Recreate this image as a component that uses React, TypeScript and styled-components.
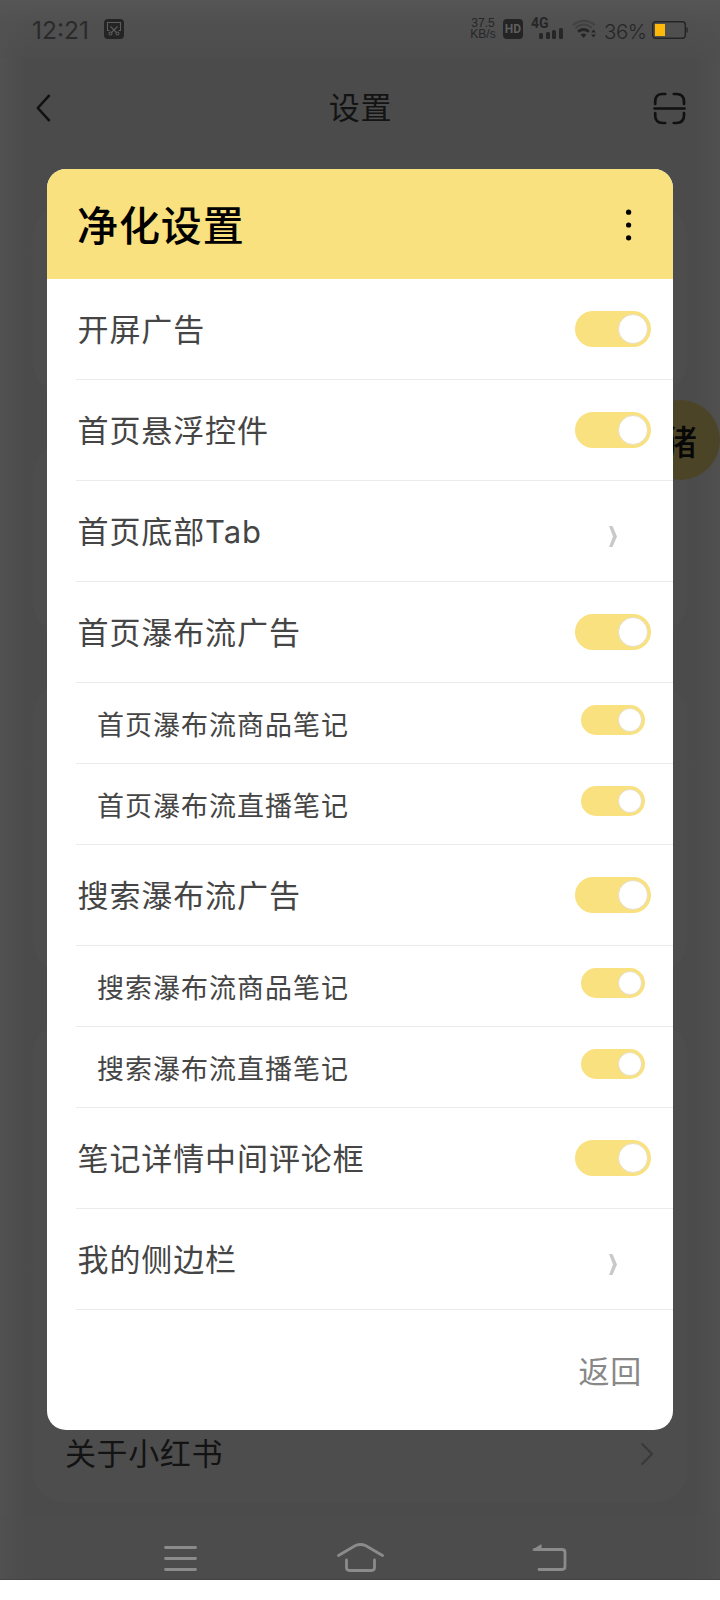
import React from "react";
import styled, { createGlobalStyle } from "styled-components";

const GlobalStyle = createGlobalStyle`
  * { box-sizing: border-box; }
  html, body { margin: 0; padding: 0; background: #fff; }
  body {
    font-family: Inter, "Noto Sans CJK SC", sans-serif;
    width: 720px;
    overflow-x: hidden;
  }
`;

const Phone = styled.div`
  position: relative;
  display: flex;
  flex-direction: column;
  width: 720px;
  height: 1580px;
  overflow: hidden;
  color: #131313;
  background: linear-gradient(90deg, #525252 0, #4e4e4e 14px, #4b4b4b 28px, #4b4b4b 692px, #4e4e4e 712px, #505050 100%);
`;

const StatusBar = styled.header`
  display: flex;
  align-items: center;
  justify-content: space-between;
  height: 58px;
  flex: none;
  padding: 0 32px 0 32px;
  color: #262626;
  background: linear-gradient(180deg, #565656 0, rgba(82, 82, 82, 0.7) 22px, rgba(78, 78, 78, 0.5) 100%);
`;

const StatusGroup = styled.div`
  display: flex;
  align-items: center;
`;

const Clock = styled.span`
  width: 72px;
  padding-top: 2px;
  font-size: 24.5px;
  font-weight: 400;
  line-height: 28px;
  color: #2a2a2a;
`;

const Speed = styled.div`
  width: 34px;
  margin-right: 3px;
  font-family: "Liberation Sans", sans-serif;
  font-size: 12px;
  line-height: 11px;
  text-align: center;
  white-space: nowrap;
`;

const HdBadge = styled.span`
  width: 20px;
  height: 20px;
  margin-right: 8px;
  border-radius: 4px;
  background: #242424;
  color: #5e5e5e;
  font: 700 12px/20px Roboto, sans-serif;
  text-align: center;
`;

const Signal = styled.div`
  display: flex;
  flex-direction: column;
  width: 41px;
  height: 22px;
`;

const Network = styled.span`
  font: 700 14px/11px Roboto, sans-serif;
`;

const Bars = styled.div`
  display: flex;
  align-items: flex-end;
  gap: 2.5px;
  height: 12px;
  margin-top: -2px;
  padding-left: 8px;
`;

const Bar = styled.i<{ $h: number }>`
  width: 4px;
  height: ${(p) => p.$h}px;
  border-radius: 1.5px;
  background: #262626;
`;

const Percent = styled.span`
  width: 48px;
  padding-top: 5px;
  font-size: 20.5px;
  font-weight: 300;
  line-height: 24px;
  letter-spacing: -0.5px;
`;

const TitleBar = styled.div`
  display: flex;
  align-items: center;
  justify-content: space-between;
  height: 100px;
  flex: none;
  padding: 0 34px 0 35px;
`;

const PageTitle = styled.h1`
  margin: 0 0 0 17px;
  font-size: 31px;
  font-weight: 400;
  line-height: 44px;
  letter-spacing: 0.8px;
`;

const CardList = styled.main`
  display: flex;
  flex-direction: column;
  flex: 1;
  padding: 48px 33px 0;
`;

const Card = styled.section<{ $h: number; $gap?: number }>`
  display: flex;
  align-items: flex-end;
  height: ${(p) => p.$h}px;
  margin-bottom: ${(p) => p.$gap ?? 0}px;
  border-radius: 30px;
  background: #4d4d4d;
`;

const CardRow = styled.div`
  display: flex;
  flex: 1;
  align-items: center;
  justify-content: space-between;
  height: 96px;
  padding: 0 33px 0 32px;
  font-size: 31px;
  line-height: 44px;
  letter-spacing: 0.6px;
`;

const NavBar = styled.nav`
  display: flex;
  align-items: center;
  height: 65px;
  flex: none;
  padding: 24px 0 0 164px;
  color: #8b8b8b;
  border-bottom: 1px solid #444;
  background: rgba(80, 80, 80, 0.3);
`;

const FloatingBall = styled.div`
  position: absolute;
  left: 640px;
  top: 400px;
  width: 80px;
  height: 80px;
  border-radius: 50%;
  background: #4c4427;
  color: #070707;
  font-size: 34px;
  font-weight: 500;
  line-height: 86px;
  text-align: center;
`;

const Dialog = styled.div`
  position: absolute;
  left: 47px;
  top: 169px;
  width: 626px;
  height: 1261px;
  border-radius: 19px;
  overflow: hidden;
  background: #fff;
`;

const DialogHeader = styled.div`
  display: flex;
  align-items: center;
  justify-content: space-between;
  height: 110px;
  padding: 0 40px 0 30px;
  background: #f8e17e;
`;

const DialogTitle = styled.h2`
  margin: 0;
  padding-top: 4px;
  color: #000;
  font-size: 41px;
  font-weight: 500;
  line-height: 60px;
  letter-spacing: 0.9px;
`;

const Row = styled.div<{ $sub?: boolean }>`
  display: flex;
  align-items: center;
  justify-content: space-between;
  height: ${(p) => (p.$sub ? 81 : 101)}px;
  margin-left: 29px;
  padding: ${(p) => (p.$sub ? "0 28px 0 21px" : "0 22px 0 1.5px")};
  border-bottom: 1px solid #ebebeb;
`;

const Label = styled.span<{ $sub?: boolean }>`
  color: #454545;
  font-size: ${(p) => (p.$sub ? 27 : 31)}px;
  letter-spacing: ${(p) => (p.$sub ? 1 : 0.9)}px;
  line-height: 44px;
  padding-top: ${(p) => (p.$sub ? 6 : 2)}px;
`;

const Switch = styled.span<{ $sub?: boolean }>`
  display: flex;
  align-items: center;
  justify-content: flex-end;
  width: ${(p) => (p.$sub ? 64 : 76)}px;
  height: ${(p) => (p.$sub ? 30 : 36)}px;
  margin-bottom: ${(p) => (p.$sub ? 6 : 0)}px;
  padding-right: 3px;
  border-radius: 18px;
  background: #f8e17e;
`;

const Knob = styled.i<{ $sub?: boolean }>`
  width: ${(p) => (p.$sub ? 24 : 30)}px;
  height: ${(p) => (p.$sub ? 24 : 30)}px;
  border: 1px solid #e6dfc8;
  border-radius: 50%;
  background: #fff;
`;

const ArrowBox = styled.span`
  display: flex;
  margin: 10px 34px 0 0;
`;

const DialogFooter = styled.div`
  display: flex;
  align-items: center;
  justify-content: flex-end;
  height: 120px;
  padding: 3px 31px 0 0;
  color: #888;
  font-size: 31px;
  line-height: 44px;
  letter-spacing: 0.8px;
`;

const items: { label: string; kind: "main" | "sub" | "link" }[] = [
  { label: "开屏广告", kind: "main" },
  { label: "首页悬浮控件", kind: "main" },
  { label: "首页底部Tab", kind: "link" },
  { label: "首页瀑布流广告", kind: "main" },
  { label: "首页瀑布流商品笔记", kind: "sub" },
  { label: "首页瀑布流直播笔记", kind: "sub" },
  { label: "搜索瀑布流广告", kind: "main" },
  { label: "搜索瀑布流商品笔记", kind: "sub" },
  { label: "搜索瀑布流直播笔记", kind: "sub" },
  { label: "笔记详情中间评论框", kind: "main" },
  { label: "我的侧边栏", kind: "link" },
];

const ScreenshotIcon = () => (
  <svg width="20" height="20" viewBox="0 0 20 20" fill="none" stroke="#5c5c5c" strokeWidth="1.1">
    <rect width="20" height="20" rx="4" fill="#242424" stroke="none" />
    <path d="M5.5 11.5H3.5V3.5H16.5V11.5H14.5" />
    <path d="M6.5 7.5L13 14M13.5 7.5L7 14" />
    <circle cx="6.5" cy="14.5" r="1.5" />
    <circle cx="13.5" cy="14.5" r="1.5" />
  </svg>
);

const WifiSvg = styled.svg`
  flex: none;
  margin-right: 7px;
`;

const WifiIcon = () => (
  <WifiSvg width="25" height="20" viewBox="0 0 25 20" fill="none">
    <path d="M1 6.2Q12 -2.5 23 6.2" stroke="#424242" strokeWidth="2.2" />
    <path d="M3.5 9Q12 2 20 9" stroke="#404040" strokeWidth="2" />
    <path d="M6 12.6Q11.5 8.5 17 12.6" stroke="#262626" strokeWidth="2.8" />
    <path d="M8.5 15.5Q11.5 13.5 14.5 15.5L11.5 19Z" fill="#262626" />
    <path d="M19 13.5L21.5 10.5L24 13.5ZM19 15.5L21.5 18.5L24 15.5Z" fill="#262626" />
  </WifiSvg>
);

const BatterySvg = styled.svg`
  flex: none;
  margin-top: 2px;
`;

const BatteryIcon = () => (
  <BatterySvg width="36" height="18" viewBox="0 0 36 18" fill="none">
    <rect x="0.7" y="0.7" width="32.6" height="16.6" rx="3" stroke="#242424" strokeWidth="1.4" />
    <rect x="3" y="3" width="10" height="12" fill="#ffb90a" />
    <path d="M35 6.5V11.5" stroke="#242424" strokeWidth="1.3" />
  </BatterySvg>
);

const BackIcon = () => (
  <svg width="16" height="28" viewBox="0 0 16 28" fill="none" stroke="#111" strokeWidth="2.6" strokeLinecap="round" strokeLinejoin="round">
    <path d="M13.8 1.8L2.8 14L13.8 26.2" />
  </svg>
);

const ScanIcon = () => (
  <svg width="33" height="33" viewBox="0 0 33 33" fill="none" stroke="#111" strokeWidth="2.7" strokeLinecap="round">
    <path d="M2.2 12V9.5Q2.2 2 9.7 2H12.2M20.8 2H23.3Q31 2 31 9.5V12M31 21V23.5Q31 31 23.3 31H20.8M12.2 31H9.7Q2.2 31 2.2 23.5V21M1.5 16.5H31.5" />
  </svg>
);

const NextIcon = () => (
  <svg width="14" height="24" viewBox="0 0 14 24" fill="none" stroke="#3a3a3a" strokeWidth="2.2" strokeLinecap="round" strokeLinejoin="round">
    <path d="M2.2 2L12 12L2.2 22" />
  </svg>
);

const MoreIcon = () => (
  <svg width="8" height="34" viewBox="0 0 8 34" fill="#000">
    <circle cx="3.6" cy="5.2" r="2.6" />
    <circle cx="3.6" cy="18" r="2.6" />
    <circle cx="3.6" cy="30.8" r="2.6" />
  </svg>
);

const LinkArrow = () => (
  <ArrowBox>
    <svg width="8" height="21" viewBox="0 0 8 21" fill="#c9c9c9">
      <path d="M0 0H3.5L8 10.5L3.5 21H0L4 10.5Z" />
    </svg>
  </ArrowBox>
);

const NavIcons = () => (
  <svg width="404" height="32" viewBox="0 0 404 32" fill="none" stroke="#8b8b8b" strokeWidth="2.8" strokeLinecap="round" strokeLinejoin="round">
    <path d="M1.5 4.5H31.5M1.5 15.5H31.5M1.5 26.5H31.5" />
    <path d="M174.5 12.5L191.5 2.5Q196.5 0.5 201.5 2.5L218.5 12.5" />
    <path d="M182.5 17V24.5Q182.5 27.5 185.5 27.5H207.5Q210.5 27.5 210.5 24.5V17" />
    <path d="M370.5 6.5H398Q401 6.5 401 9.5V23.5Q401 26.5 398 26.5H375" />
    <path d="M369 7L377 2V7Z" fill="#8b8b8b" strokeWidth="1.2" />
  </svg>
);

export default function App() {
  return (
    <>
      <GlobalStyle />
      <Phone>
        <StatusBar>
          <StatusGroup>
            <Clock>12:21</Clock>
            <ScreenshotIcon />
          </StatusGroup>
          <StatusGroup>
            <Speed>37.5<br />KB/s</Speed>
            <HdBadge>HD</HdBadge>
            <Signal>
              <Network>4G</Network>
              <Bars>
                <Bar $h={6} />
                <Bar $h={7} />
                <Bar $h={9} />
                <Bar $h={11} />
              </Bars>
            </Signal>
            <WifiIcon />
            <Percent>36%</Percent>
            <BatteryIcon />
          </StatusGroup>
        </StatusBar>
        <TitleBar>
          <BackIcon />
          <PageTitle>设置</PageTitle>
          <ScanIcon />
        </TitleBar>
        <CardList>
          <Card $h={186} $gap={52} />
          <Card $h={188} $gap={52} />
          <Card $h={288} $gap={52} />
          <Card $h={478}>
            <CardRow>
              <span>关于小红书</span>
              <NextIcon />
            </CardRow>
          </Card>
        </CardList>
        <NavBar>
          <NavIcons />
        </NavBar>
        <FloatingBall>猪</FloatingBall>
        <Dialog>
          <DialogHeader>
            <DialogTitle>净化设置</DialogTitle>
            <MoreIcon />
          </DialogHeader>
          {items.map(({ label, kind }) => {
            const sub = kind === "sub";
            return (
              <Row key={label} $sub={sub}>
                <Label $sub={sub}>{label}</Label>
                {kind === "link" ? (
                  <LinkArrow />
                ) : (
                  <Switch $sub={sub}>
                    <Knob $sub={sub} />
                  </Switch>
                )}
              </Row>
            );
          })}
          <DialogFooter>返回</DialogFooter>
        </Dialog>
      </Phone>
    </>
  );
}
